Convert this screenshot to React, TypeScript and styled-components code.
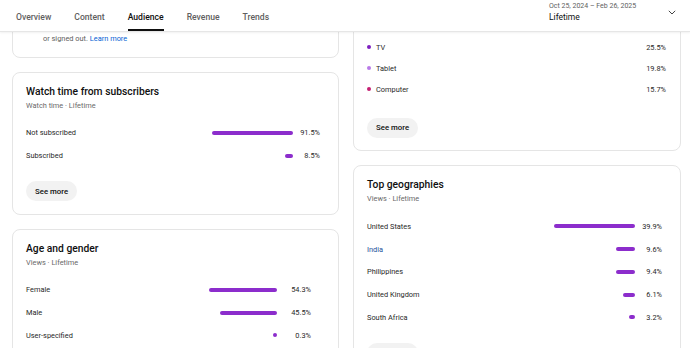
import React from "react";
import styled, { createGlobalStyle } from "styled-components";

const GlobalStyle = createGlobalStyle`
  html, body { margin: 0; padding: 0; background: #ffffff; }
  body { font-family: Roboto, "Noto Sans", Arial, sans-serif; color: #0f0f0f; }
  * { box-sizing: border-box; }
`;

const PURPLE = "#8c2dcc";

const Page = styled.div`
  width: 690px;
  height: 348px;
  overflow: hidden;
  display: flex;
  flex-direction: column;
  background: #fff;
`;

const Header = styled.header`
  height: 32px;
  flex: none;
  display: flex;
  align-items: stretch;
  justify-content: space-between;
  padding: 0 14px 0 16px;
  border-bottom: 1px solid #e6e6e6;
  box-shadow: 0 1px 2px rgba(0, 0, 0, 0.06);
  position: relative;
  z-index: 1;
  background: #fff;
`;

const Tabs = styled.nav`
  display: flex;
  gap: 23px;
`;

const Tab = styled.div<{ $active?: boolean }>`
  display: flex;
  align-items: flex-end;
  padding-bottom: 7px;
  font-size: 8.6px;
  line-height: 10px;
  font-weight: 500;
  color: ${(p) => (p.$active ? "#0f0f0f" : "#606060")};
  border-bottom: 2px solid ${(p) => (p.$active ? "#0f0f0f" : "transparent")};
`;

const Selector = styled.div`
  width: 127px;
  align-self: flex-start;
  padding-top: 1.5px;
  display: flex;
  align-items: center;
  justify-content: space-between;
`;

const RangeText = styled.div`
  display: flex;
  flex-direction: column;
`;

const DateLine = styled.span`
  font-size: 7px;
  line-height: 9px;
  color: #606060;
`;

const PeriodLine = styled.span`
  font-size: 8.5px;
  line-height: 12px;
  color: #0f0f0f;
`;

const Main = styled.main`
  flex: 1;
  min-height: 0;
  overflow: hidden;
  display: grid;
  grid-template-columns: 327px 328px;
  column-gap: 14px;
  align-items: start;
  padding-left: 12px;
`;

const Column = styled.div<{ $offset: number }>`
  display: flex;
  flex-direction: column;
  gap: 14px;
  margin-top: ${(p) => p.$offset}px;
`;

const Card = styled.section<{ $pr: number }>`
  border: 1px solid #e5e5e5;
  border-radius: 8px;
  padding: 12px ${(p) => p.$pr}px 12.5px 13px;
  background: #fff;
`;

const Title = styled.h2`
  margin: 0;
  font-size: 10.3px;
  line-height: 14px;
  font-weight: 500;
  color: #0f0f0f;
`;

const Subtitle = styled.div`
  font-size: 7.4px;
  line-height: 13px;
  color: #6a6a6a;
`;

const Rows = styled.div`
  margin-top: 10px;
  display: flex;
  flex-direction: column;
`;

const Row = styled.div`
  height: 22.75px;
  display: flex;
  align-items: center;
`;

const Label = styled.span<{ $link?: boolean }>`
  flex: 1;
  font-size: 7.4px;
  color: ${(p) => (p.$link ? "#1d4f9a" : "#282828")};
  white-space: nowrap;
`;

const Track = styled.div<{ $w: number }>`
  width: ${(p) => p.$w}px;
  display: flex;
  justify-content: flex-end;
`;

const Bar = styled.div`
  height: 4px;
  border-radius: 2px;
  background: ${PURPLE};
`;

const Pct = styled.span<{ $w: number }>`
  width: ${(p) => p.$w}px;
  text-align: right;
  font-size: 7.4px;
  color: #282828;
`;

const SeeMore = styled.button`
  margin-top: 14px;
  height: 20px;
  padding: 0 9px;
  border: none;
  border-radius: 10px;
  background: #f2f2f2;
  font-family: inherit;
  font-size: 7.8px;
  font-weight: 500;
  color: #0f0f0f;
  cursor: pointer;
`;

const Note = styled.div`
  margin-top: 10px;
  display: flex;
  gap: 3px;
`;

const NoteIcon = styled.div`
  width: 14px;
  flex: none;
  display: flex;
  justify-content: center;
  padding-top: 1px;
`;

const NoteText = styled.p`
  margin: 0;
  font-size: 7.4px;
  line-height: 11px;
  color: #606060;
`;

const Link = styled.a`
  color: #065fd4;
  text-decoration: none;
`;

const DonutBox = styled.div`
  height: 80px;
  display: flex;
  align-items: center;
  justify-content: center;
`;

const Legend = styled.div`
  display: flex;
  flex-direction: column;
  margin-bottom: 4px;
`;

const LegendRow = styled.div`
  height: 21px;
  display: flex;
  align-items: center;
  gap: 5px;
`;

const Dot = styled.span<{ $color: string }>`
  width: 4px;
  height: 4px;
  border-radius: 50%;
  background: ${(p) => p.$color};
  flex: none;
`;

type BarItem = { label: string; pct: number; link?: boolean };

function BarCard(props: {
  title: string;
  subtitle: string;
  items: BarItem[];
  track: number;
  scale: number;
  pctW: number;
  pr: number;
  more?: boolean;
}) {
  return (
    <Card $pr={props.pr}>
      <Title>{props.title}</Title>
      <Subtitle>{props.subtitle}</Subtitle>
      <Rows>
        {props.items.map((it) => (
          <Row key={it.label}>
            <Label $link={it.link}>{it.label}</Label>
            <Track $w={props.track}>
              <Bar style={{ width: Math.max(4, it.pct * props.scale) }} />
            </Track>
            <Pct $w={props.pctW}>{it.pct.toFixed(1)}%</Pct>
          </Row>
        ))}
      </Rows>
      {props.more !== false && <SeeMore>See more</SeeMore>}
    </Card>
  );
}

const devices = [
  { label: "Mobile phone", pct: 39.0, color: "#5b0f9e" },
  { label: "TV", pct: 25.5, color: "#7e1fc0" },
  { label: "Tablet", pct: 19.8, color: "#b97ae8" },
  { label: "Computer", pct: 15.7, color: "#c51f72" },
];

export default function App() {
  return (
    <>
      <GlobalStyle />
      <Page>
        <Header>
          <Tabs>
            <Tab>Overview</Tab>
            <Tab>Content</Tab>
            <Tab $active>Audience</Tab>
            <Tab>Revenue</Tab>
            <Tab>Trends</Tab>
          </Tabs>
          <Selector>
            <RangeText>
              <DateLine>Oct 25, 2024 – Feb 26, 2025</DateLine>
              <PeriodLine>Lifetime</PeriodLine>
            </RangeText>
            <svg width="8" height="5" viewBox="0 0 8 5" aria-hidden="true">
              <polyline points="0.8,0.8 4,4 7.2,0.8" fill="none" stroke="#303030" strokeWidth="0.9" />
            </svg>
          </Selector>
        </Header>
        <Main>
          <Column $offset={-60}>
            <Card $pr={18}>
              <Title>Returning viewers</Title>
              <Subtitle>Views · Lifetime</Subtitle>
              <Note>
                <NoteIcon>
                  <svg width="8" height="8" viewBox="0 0 8 8" aria-hidden="true">
                    <circle cx="4" cy="4" r="3.4" fill="none" stroke="#606060" strokeWidth="0.8" />
                    <line x1="4" y1="3.4" x2="4" y2="6" stroke="#606060" strokeWidth="0.8" />
                    <circle cx="4" cy="2.2" r="0.5" fill="#606060" />
                  </svg>
                </NoteIcon>
                <NoteText>
                  Viewer counts include people who watched while signed in
                  <br />
                  or signed out. <Link href="#">Learn more</Link>
                </NoteText>
              </Note>
            </Card>
            <BarCard
              title="Watch time from subscribers"
              subtitle="Watch time · Lifetime"
              items={[
                { label: "Not subscribed", pct: 91.5 },
                { label: "Subscribed", pct: 8.5 },
              ]}
              track={88.5}
              scale={0.885}
              pctW={27}
              pr={18}
            />
            <BarCard
              title="Age and gender"
              subtitle="Views · Lifetime"
              items={[
                { label: "Female", pct: 54.3 },
                { label: "Male", pct: 45.5 },
                { label: "User-specified", pct: 0.3 },
              ]}
              track={125}
              scale={1.252}
              pctW={34}
              pr={27}
            />
          </Column>
          <Column $offset={-146.5}>
            <Card $pr={14}>
              <Title>Device type</Title>
              <Subtitle>Views · Lifetime</Subtitle>
              <Rows>
                <DonutBox>
                  <svg width="70" height="70" viewBox="0 0 70 70" aria-hidden="true">
                    <circle cx="35" cy="35" r="28" fill="none" stroke="#5b0f9e" strokeWidth="10" />
                  </svg>
                </DonutBox>
                <Legend>
                  {devices.map((d) => (
                    <LegendRow key={d.label}>
                      <Dot $color={d.color} />
                      <Label>{d.label}</Label>
                      <Pct $w={30}>{d.pct.toFixed(1)}%</Pct>
                    </LegendRow>
                  ))}
                </Legend>
              </Rows>
              <SeeMore>See more</SeeMore>
            </Card>
            <BarCard
              title="Top geographies"
              subtitle="Views · Lifetime"
              items={[
                { label: "United States", pct: 39.9 },
                { label: "India", pct: 9.6, link: true },
                { label: "Philippines", pct: 9.4 },
                { label: "United Kingdom", pct: 6.1 },
                { label: "South Africa", pct: 3.2 },
              ]}
              track={203}
              scale={2.03}
              pctW={27}
              pr={18}
            />
          </Column>
        </Main>
      </Page>
    </>
  );
}
